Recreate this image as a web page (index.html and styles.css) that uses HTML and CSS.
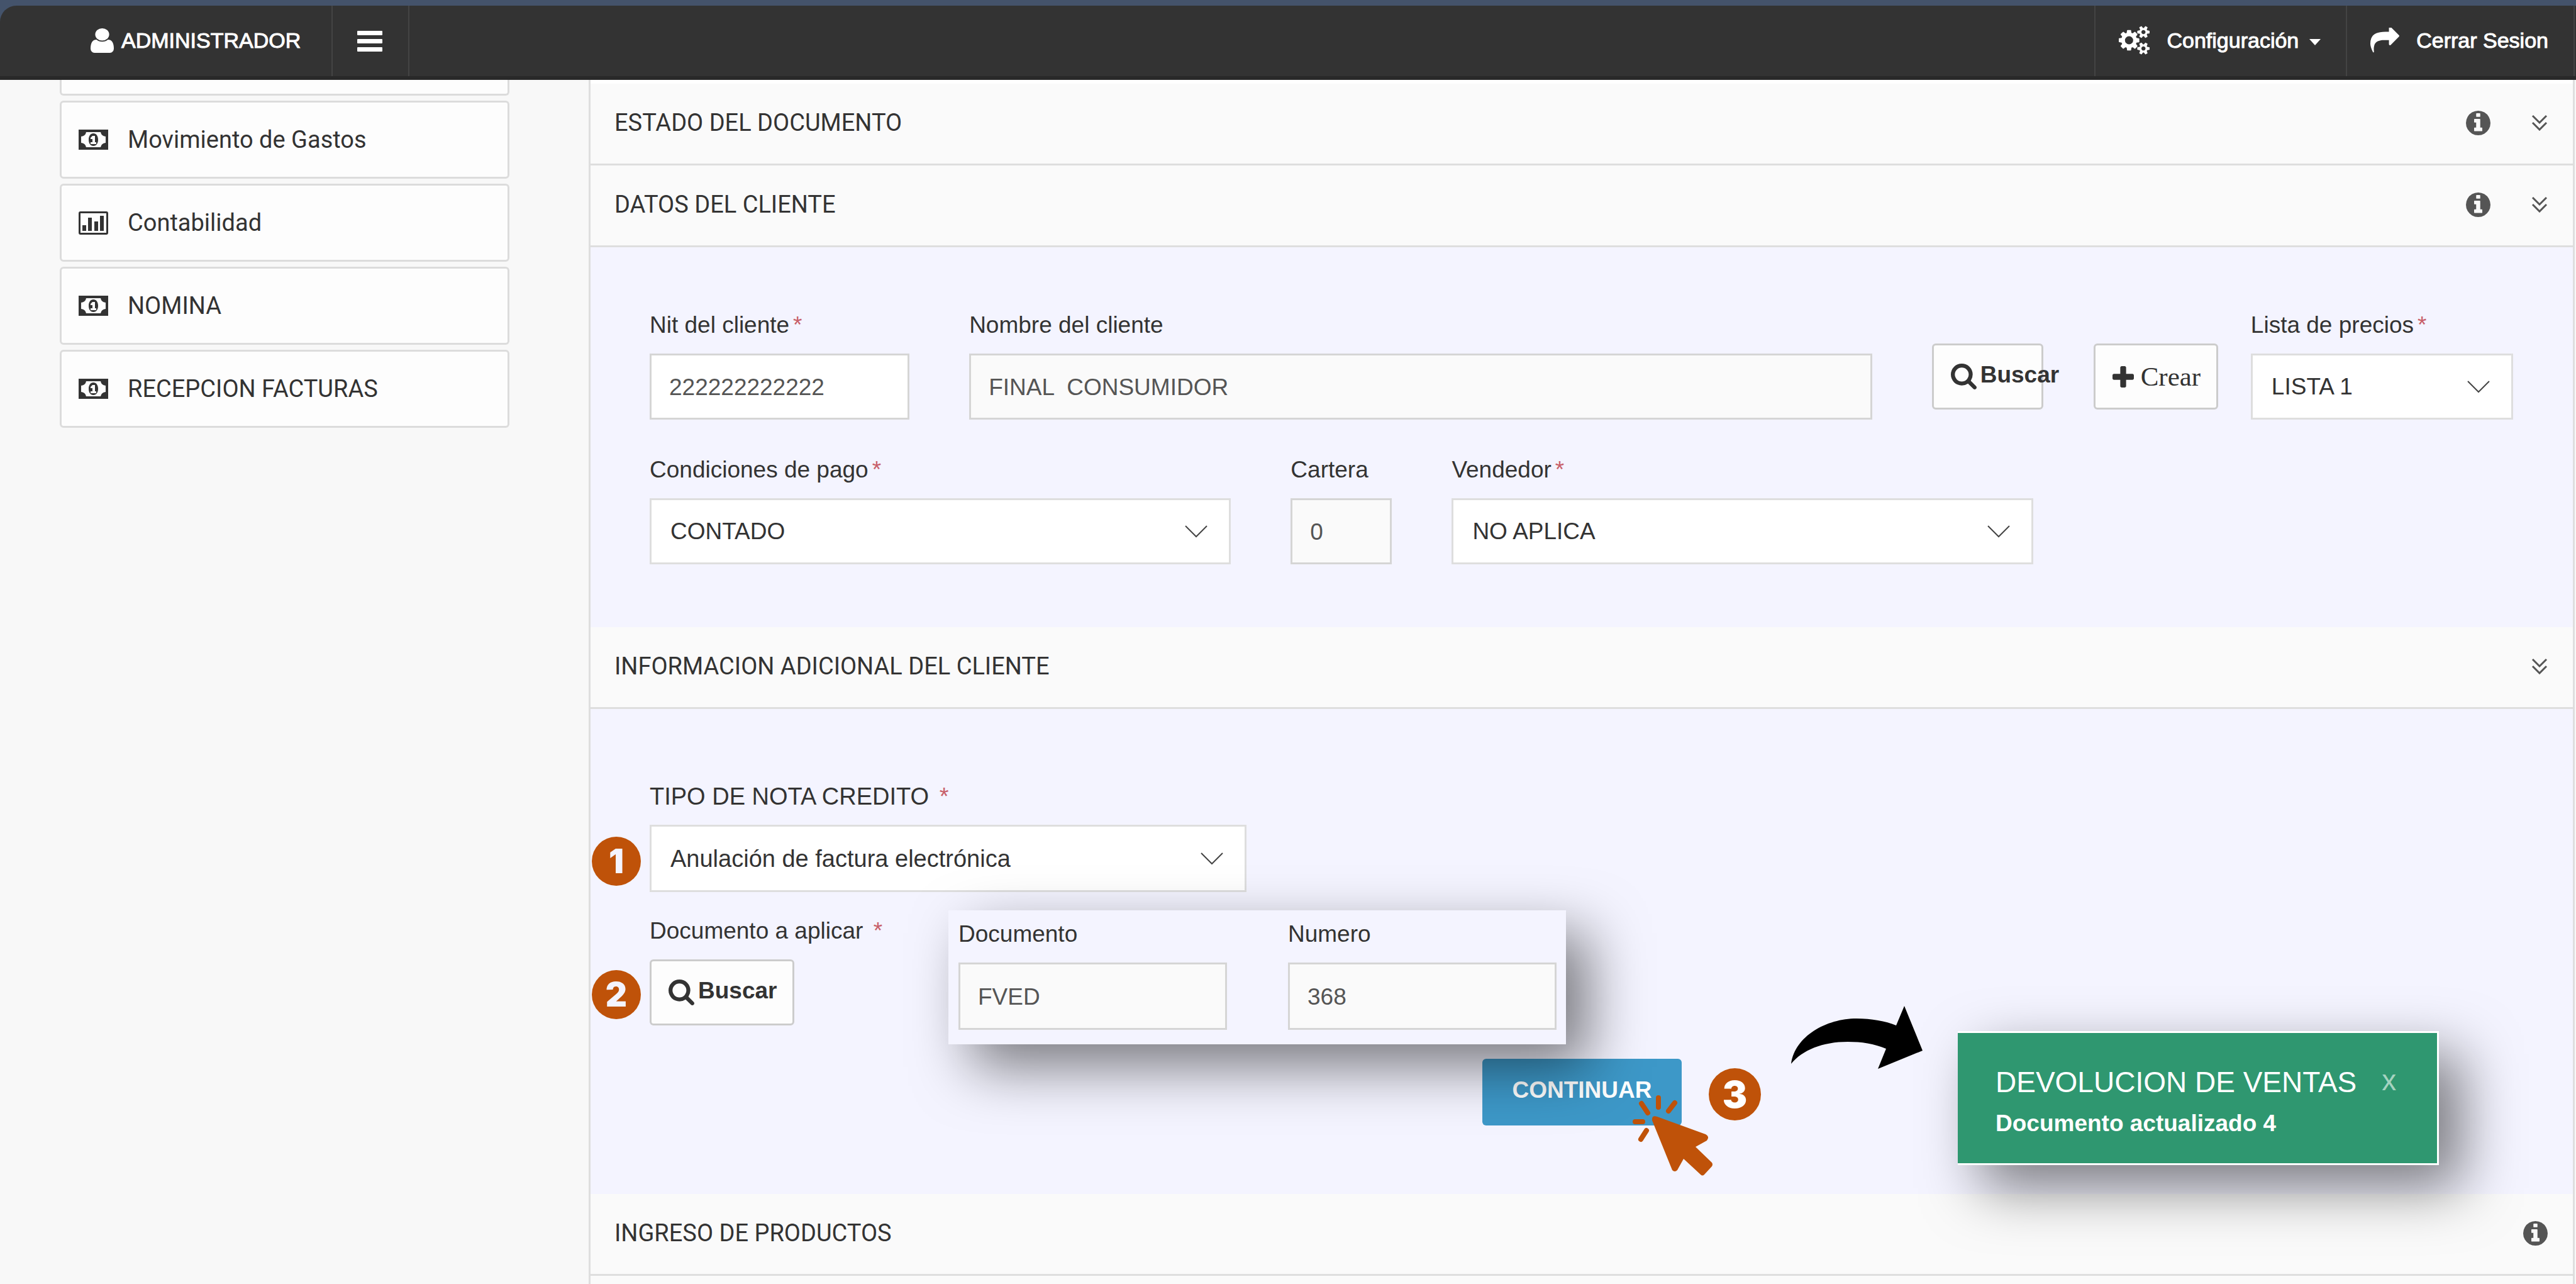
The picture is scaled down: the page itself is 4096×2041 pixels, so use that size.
FILE: index.html
```html
<!DOCTYPE html>
<html lang="es">
<head>
<meta charset="utf-8">
<title>Devolución de ventas</title>
<link rel="stylesheet" href="styles.css">
</head>
<body>
<svg class="sprite" aria-hidden="true">
  <symbol id="i-money" viewBox="0 0 47 32">
    <path fill-rule="evenodd" d="M0 0H47V32H0ZM12 4Q11 10 4 11V21Q11 22 12 28H35Q36 22 43 21V11Q36 10 35 4Z"/>
    <path fill-rule="evenodd" d="M23.500 6C28 6 31 10 31 16S28 26 23.500 26S16 22 16 16S19 6 23.500 6ZM22 10L19 13V15H22V20H19V23H28V20H26V10Z"/>
  </symbol>
  <symbol id="i-chart" viewBox="0 0 47 37">
    <path fill-rule="evenodd" d="M3 0H44Q47 0 47 3V34Q47 37 44 37H3Q0 37 0 34V3Q0 0 3 0ZM3 3V34H44V3Z"/>
    <path d="M6 22H12V31H6ZM15 10H21V31H15ZM25 16H31V31H25ZM34 7H40V31H34Z"/>
  </symbol>
  <symbol id="i-info" viewBox="128 128 1536 1536">
    <path d="M1152 1376v-160q0-14-9-23t-23-9h-96v-512q0-14-9-23t-23-9h-320q-14 0-23 9t-9 23v160q0 14 9 23t23 9h96v320h-96q-14 0-23 9t-9 23v160q0 14 9 23t23 9h448q14 0 23-9t9-23zm-128-896v-160q0-14-9-23t-23-9h-192q-14 0-23 9t-9 23v160q0 14 9 23t23 9h192q14 0 23-9t9-23zm640 416q0 209-103 385.500t-279.500 279.500-385.500 103-385.500-103-279.500-279.500-103-385.500 103-385.500 279.500-279.500 385.500-103 385.500 103 279.500 279.500 103 385.500z"/>
  </symbol>
  <symbol id="i-down" viewBox="0 0 26 26">
    <path d="M2 2L13 13L24 2M2 13L13 24L24 13" fill="none" stroke="currentColor" stroke-width="3"/>
  </symbol>
  <symbol id="i-search" viewBox="64 128 1664 1664" preserveAspectRatio="none">
    <path d="M1216 832q0-185-131.500-316.500t-316.500-131.500-316.500 131.500-131.500 316.500 131.500 316.500 316.500 131.500 316.500-131.500 131.500-316.500zm512 832q0 52-38 90t-90 38q-54 0-90-38l-343-342q-179 124-399 124-143 0-273.500-55.500t-225-150-150-225-55.500-273.500 55.500-273.500 150-225 225-150 273.500-55.500 273.500 55.500 225 150 150 225 55.500 273.500q0 220-124 399l343 343q37 37 37 90z"/>
  </symbol>
</svg>

<header class="topbar">
  <a class="topbar-user" href="#">
    <svg class="ico-user" viewBox="256 128 1280 1536" preserveAspectRatio="none" aria-hidden="true"><path d="M1536 1399q0 109-62.500 187t-150.500 78h-854q-88 0-150.500-78t-62.500-187q0-85 8.500-160.500t31.500-152 58.500-131 94-89 134.500-34.500q131 128 313 128t313-128q76 0 134.500 34.500t94 89 58.500 131 31.500 152 8.500 160.500zm-256-887q0 159-112.500 271.500t-271.500 112.500-271.500-112.500-112.500-271.500 112.500-271.500 271.500-112.500 271.500 112.500 112.500 271.500z"/></svg>
    <span>ADMINISTRADOR</span>
  </a>
  <button class="topbar-toggle" type="button" aria-label="Menú">
    <svg class="ico-bars" viewBox="0 0 40 33" aria-hidden="true"><path d="M1 0H39Q40 0 40 1V6Q40 7 39 7H1Q0 7 0 6V1Q0 0 1 0ZM1 13H39Q40 13 40 14V19Q40 20 39 20H1Q0 20 0 19V14Q0 13 1 13ZM1 26H39Q40 26 40 27V32Q40 33 39 33H1Q0 33 0 32V27Q0 26 1 26Z"/></svg>
  </button>
  <nav class="topbar-links">
    <a href="#">
      <svg class="ico-cogs" viewBox="0 0 1920 1792" aria-hidden="true"><path d="M896 896q0-106-75-181t-181-75-181 75-75 181 75 181 181 75 181-75 75-181zm768 512q0-52-38-90t-90-38-90 38-38 90q0 53 37.500 90.500t90.500 37.500 90.500-37.500 37.500-90.500zm0-1024q0-52-38-90t-90-38-90 38-38 90q0 53 37.500 90.500t90.500 37.500 90.500-37.500 37.500-90.500zm-384 421v185q0 10-7 19.500t-16 10.500l-155 24q-11 35-32 76 34 48 90 115 7 11 7 20 0 12-7 19-23 30-82.500 89.500t-78.500 59.500q-11 0-21-7l-115-90q-37 19-77 31-11 108-23 155-7 24-30 24h-186q-11 0-20-7.500t-10-17.500l-23-153q-34-10-75-31l-118 89q-7 7-20 7-11 0-21-8-144-133-144-160 0-9 7-19 10-14 41-53t47-61q-23-44-35-82l-152-24q-10-1-17-9.500t-7-19.500v-185q0-10 7-19.500t16-10.500l155-24q11-35 32-76-34-48-90-115-7-11-7-20 0-12 7-20 22-30 82-89t79-59q11 0 21 7l115 90q34-18 77-32 11-108 23-154 7-24 30-24h186q11 0 20 7.500t10 17.500l23 153q34 10 75 31l118-89q8-7 20-7 11 0 21 8 144 133 144 160 0 8-7 19-12 16-42 54t-45 60q23 48 34 82l152 23q10 2 17 10.500t7 19.500zm640 533v140q0 16-149 31-12 27-30 52 51 113 51 138 0 4-4 7-122 71-124 71-8 0-46-47t-52-68q-20 2-30 2t-30-2q-14 21-52 68t-46 47q-2 0-124-71-4-3-4-7 0-25 51-138-18-25-30-52-149-15-149-31v-140q0-16 149-31 13-29 30-52-51-113-51-138 0-4 4-7 4-2 35-20t59-34 30-16q8 0 46 46.500t52 67.500q20-2 30-2t30 2q51-71 92-112l6-2q4 0 124 70 4 3 4 7 0 25-51 138 17 23 30 52 149 15 149 31zm0-1024v140q0 16-149 31-12 27-30 52 51 113 51 138 0 4-4 7-122 71-124 71-8 0-46-47t-52-68q-20 2-30 2t-30-2q-14 21-52 68t-46 47q-2 0-124-71-4-3-4-7 0-25 51-138-18-25-30-52-149-15-149-31v-140q0-16 149-31 13-29 30-52-51-113-51-138 0-4 4-7 4-2 35-20t59-34 30-16q8 0 46 46.500t52 67.500q20-2 30-2t30 2q51-71 92-112l6-2q4 0 124 70 4 3 4 7 0 25-51 138 17 23 30 52 149 15 149 31z"/></svg>
      <span>Configuración</span>
      <i class="caret"></i>
    </a>
    <a href="#">
      <svg class="ico-share" viewBox="0 128 1792 1600" preserveAspectRatio="none" aria-hidden="true"><path d="M1792 640q0 26-19 45l-512 512q-19 19-45 19t-45-19-19-45v-256h-224q-98 0-175.500 6t-154 21.500-133 42.500-105.500 69.500-80 101-48.500 138.500-17.500 181q0 55 5 123 0 6 2.500 23.500t2.500 26.500q0 15-8.500 25t-23.500 10q-16 0-28-17-7-9-13-22t-13.500-30-10.500-24q-127-285-127-451 0-199 53-333 162-403 875-403h224v-256q0-26 19-45t45-19 45 19l512 512q19 19 19 45z"/></svg>
      <span>Cerrar Sesion</span>
    </a>
  </nav>
</header>

<div class="layout">
  <nav class="sidebar">
    <ul class="menu">
      <li class="menu-item menu-item-cut"></li>
      <li class="menu-item"><a href="#"><svg class="ico-money"><use href="#i-money"/></svg><span>Movimiento de Gastos</span></a></li>
      <li class="menu-item"><a href="#"><svg class="ico-chart"><use href="#i-chart"/></svg><span>Contabilidad</span></a></li>
      <li class="menu-item"><a href="#"><svg class="ico-money"><use href="#i-money"/></svg><span>NOMINA</span></a></li>
      <li class="menu-item"><a href="#"><svg class="ico-money"><use href="#i-money"/></svg><span>RECEPCION FACTURAS</span></a></li>
    </ul>
  </nav>

  <main class="content">
    <section>
      <div class="head">
        <h2>ESTADO DEL DOCUMENTO</h2>
        <button type="button" aria-label="Información"><svg class="ico-info"><use href="#i-info"/></svg></button>
        <button type="button" aria-label="Desplegar"><svg class="ico-down"><use href="#i-down"/></svg></button>
      </div>
    </section>

    <section>
      <div class="head">
        <h2>DATOS DEL CLIENTE</h2>
        <button type="button" aria-label="Información"><svg class="ico-info"><use href="#i-info"/></svg></button>
        <button type="button" aria-label="Desplegar"><svg class="ico-down"><use href="#i-down"/></svg></button>
      </div>
      <div class="body body-client">
        <div class="row row-client">
          <div class="field"><label for="nit">Nit del cliente<b class="req">*</b></label><input id="nit" type="text" value="222222222222"></div>
          <div class="field"><label for="nombre">Nombre del cliente</label><input id="nombre" type="text" value="FINAL  CONSUMIDOR" readonly></div>
          <div class="actions">
            <button class="btn btn-narrow" type="button"><svg class="ico-search"><use href="#i-search"/></svg><span class="strong">Buscar</span></button>
            <button class="btn" type="button"><svg class="ico-plus" viewBox="192 128 1408 1408" aria-hidden="true"><path d="M1600 736v192q0 40-28 68t-68 28h-416v416q0 40-28 68t-68 28h-192q-40 0-68-28t-28-68v-416h-416q-40 0-68-28t-28-68v-192q0-40 28-68t68-28h416v-416q0-40 28-68t68-28h192q40 0 68 28t28 68v416h416q40 0 68 28t28 68z"/></svg><span class="serif">Crear</span></button>
          </div>
          <div class="field"><label for="lista">Lista de precios<b class="req">*</b></label><select id="lista"><option>LISTA 1</option></select></div>
        </div>
        <div class="row row-terms">
          <div class="field"><label for="pago">Condiciones de pago<b class="req">*</b></label><select id="pago"><option>CONTADO</option></select></div>
          <div class="field"><label for="cartera">Cartera</label><input id="cartera" type="text" value="0" readonly></div>
          <div class="field"><label for="vendedor">Vendedor<b class="req">*</b></label><select id="vendedor"><option>NO APLICA</option></select></div>
        </div>
      </div>
    </section>

    <section>
      <div class="head">
        <h2>INFORMACION ADICIONAL DEL CLIENTE</h2>
        <button type="button" aria-label="Desplegar"><svg class="ico-down"><use href="#i-down"/></svg></button>
      </div>
      <div class="body body-note">
        <div class="field field-type">
          <label for="tipo">TIPO DE NOTA CREDITO <b class="req">*</b></label>
          <select id="tipo"><option>Anulación de factura electrónica</option></select>
          <span class="step step-side">1</span>
        </div>
        <div class="row-doc">
          <div class="field doc-search">
            <label for="buscar-doc">Documento a aplicar <b class="req">*</b></label>
            <button class="btn" id="buscar-doc" type="button"><svg class="ico-search"><use href="#i-search"/></svg><span class="strong">Buscar</span></button>
            <span class="step step-side">2</span>
          </div>
          <div class="doc-card">
            <div class="field"><label for="doc">Documento</label><input id="doc" type="text" value="FVED" readonly></div>
            <div class="field"><label for="num">Numero</label><input id="num" type="text" value="368" readonly></div>
          </div>
        </div>
        <div class="submit">
          <button class="btn-primary" type="button">CONTINUAR</button>
          <svg class="pointer" viewBox="0 0 128 128" aria-hidden="true">
            <path d="M42 4V19M15 13L25 28M68 12L58 25M5 42H17M23 56L14 70" fill="none" stroke="#bf5209" stroke-width="8" stroke-linecap="round"/>
            <path d="M40 34L117 62Q124 66 119 72L101 82L127 107Q129 110 127 113L115 126Q112 129 109 126L82 101L72 119Q68 123 64 119L32 40Q31 31 40 34Z" fill="#bf5209"/>
          </svg>
          <span class="step step-big">3</span>
          <svg class="swoosh" viewBox="0 0 209 100" aria-hidden="true"><path d="M0 92C6 48 56 20 104 20C128 20 150 24 167 31L180 0L209 71L138 100L151 68C132 60 112 57 90 57C50 57 18 70 0 92Z"/></svg>
        </div>
        <div class="toast" role="status">
          <div class="toast-head"><strong>DEVOLUCION DE VENTAS</strong><button type="button" aria-label="Cerrar">x</button></div>
          <p>Documento actualizado 4</p>
        </div>
      </div>
    </section>

    <section class="last">
      <div class="head">
        <h2>INGRESO DE PRODUCTOS</h2>
        <button type="button" aria-label="Información"><svg class="ico-info"><use href="#i-info"/></svg></button>
      </div>
    </section>
  </main>
</div>
</body>
</html>
```
FILE: styles.css
```css
* { box-sizing: border-box; }

body {
  margin: 0;
  min-height: 100vh;
  display: flex;
  flex-direction: column;
  padding-top: 9px;
  background: #44536b;
  color: #333;
  font: 37px/44px "Liberation Sans", Arial, sans-serif;
}

button, input, select { font: inherit; color: inherit; margin: 0; }
button { background: none; border: 0; padding: 0; cursor: pointer; }
a { color: inherit; text-decoration: none; }
svg { display: block; flex: none; fill: currentColor; }
.sprite { position: absolute; width: 0; height: 0; }

/* Top bar */
.topbar {
  display: flex;
  height: 118px;
  background: #333;
  border-bottom: 6px solid #292929;
  border-top-left-radius: 26px;
  color: #fff;
  font-size: 34px;
  -webkit-text-stroke: 1px currentColor;
}
.topbar-user { display: flex; align-items: center; gap: 12px; padding: 0 49px 2px 144px; }
.topbar-toggle { width: 124px; padding-left: 39px; border: 2px solid #444; border-width: 0 2px; }
.topbar-links { display: flex; margin-left: auto; margin-right: 2px; border-right: 2px solid #444; }
.topbar-links a { display: flex; align-items: center; padding: 0 40px 2px 37px; border-left: 2px solid #444; }
.topbar-links svg { margin-right: 27px; }
.caret { margin: 6px 0 0 17px; border: 9px solid transparent; border-top: 10px solid #fff; border-bottom: 0; }
.ico-user { width: 37px; height: 39px; }
.ico-bars { width: 40px; height: 33px; }
.ico-cogs { width: 49px; height: 46px; }
.ico-share { width: 46px; height: 41px; }

/* Page frame */
.layout { flex: 1; display: flex; background: #f8f8f8; }
.sidebar { width: 936px; flex: none; padding: 0 126px 0 95px; }
.content {
  flex: 1;
  display: flex;
  flex-direction: column;
  margin-right: 2px;
  padding-top: 6px;
  background: #fff;
  border: 3px solid #dedede;
  border-width: 0 3px;
}

/* Side menu */
.menu { list-style: none; margin: 0; padding: 0; display: flex; flex-direction: column; gap: 8px; }
.menu-item { height: 124px; background: #fdfdfd; border: 3px solid #dcdcdc; border-radius: 6px; }
.menu-item-cut { height: 25px; border-top: 0; border-radius: 0 0 6px 6px; }
.menu-item a {
  display: flex;
  align-items: center;
  gap: 31px;
  height: 100%;
  padding: 0 27px;
  font: 38px/52px Roboto, sans-serif;
}
.ico-money { width: 47px; height: 32px; }
.ico-chart { width: 47px; height: 37px; }

/* Section headings */
.head {
  display: flex;
  align-items: center;
  gap: 65px;
  height: 130px;
  padding: 0 40px 3px 38px;
  background: #fafafa;
  border-bottom: 3px solid #dedede;
  color: #555;
}
.head h2 {
  flex: 1;
  margin: 0;
  color: #333;
  font: 38px/52px Roboto, sans-serif;
}
.ico-info { width: 39px; height: 39px; }
.ico-down { width: 26px; height: 26px; }
.last { flex: 1; background: #fafafa; }

/* Forms */
.body { position: relative; background: #f4f4ff; padding: 0 95px 0 94px; }
.body-client { display: flex; flex-direction: column; gap: 58px; padding-top: 102px; padding-bottom: 100px; }
.body-note { padding-top: 117px; padding-bottom: 109px; }

.field { display: flex; flex-direction: column; gap: 23px; min-width: 0; }
.field label { white-space: nowrap; }
.req { margin-left: 6px; font-weight: normal; color: #c8606a; }

input, select {
  width: 100%;
  height: 105px;
  border: 3px solid #dedede;
  border-radius: 0;
  background: #fff;
  outline: 0;
}
input { padding: 3px 28px 0; border-color: #d5d5d5; color: #555; white-space: pre; }
input[readonly] { background: #fafafa; }
select {
  appearance: none;
  padding: 0 90px 0 30px;
  background: #fff url("data:image/svg+xml,%3Csvg xmlns='http://www.w3.org/2000/svg' width='38' height='21' viewBox='0 0 38 21'%3E%3Cpath d='M2 2L19 19L36 2' fill='none' stroke='%23444' stroke-width='2'/%3E%3C/svg%3E") no-repeat right 33px center;
}

.row { display: grid; align-items: start; column-gap: 95px; }
.row-client { grid-template-columns: 413fr 1435fr 457fr 372fr; }
.row-client .field:last-child { margin-left: -45px; }
.row-terms { grid-template-columns: 924fr 161fr 924fr 668fr; }

.actions { display: flex; gap: 80px; margin-top: 51px; }
.btn {
  display: flex;
  align-items: center;
  height: 105px;
  padding: 0 25px 0 27px;
  border: 3px solid #ccc;
  border-radius: 6px;
  background: #fdfdfd;
  white-space: nowrap;
}
.btn-narrow { width: 177px; }
.btn .strong { margin-left: 6px; padding-bottom: 6px; font-weight: bold; }
.btn .serif { margin-left: 11px; font: 43px/50px "Liberation Serif", serif; }
.ico-search { width: 41px; height: 41px; }
.ico-plus { width: 34px; height: 34px; }

/* Credit note */
.field-type { position: relative; width: 949px; font-size: 38px; }
.field-type select, .doc-card input { height: 107px; }
.row-doc { display: flex; align-items: flex-start; margin-top: 29px; }
.doc-search { position: relative; width: 475px; margin-top: 11px; align-items: flex-start; }
.doc-card {
  position: relative;
  z-index: 1;
  display: grid;
  grid-template-columns: 1fr 1fr;
  column-gap: 97px;
  width: 982px;
  padding: 16px 15px 23px 16px;
  background: #f4f4ff;
  box-shadow: 36px 36px 90px rgba(0, 0, 0, .5);
}
.submit { position: relative; display: flex; margin: 23px 0 0 1324px; }
.btn-primary {
  width: 317px;
  height: 106px;
  padding-bottom: 6px;
  border-radius: 6px;
  background: #3d98c8;
  color: #fff;
  font-weight: bold;
}

/* Step markers and pointers laid over the form */
.step {
  position: absolute;
  display: flex;
  align-items: center;
  justify-content: center;
  width: 78px;
  height: 78px;
  border-radius: 50%;
  background: #bf5209;
  color: #f4f4ff;
  font: 900 53px/53px Inter, sans-serif;
}
.step-side { left: -92px; bottom: 10px; }
.step-big { left: 360px; top: 15px; width: 83px; height: 83px; color: #fff; font-size: 59px; z-index: 2; }
.pointer { position: absolute; left: 238px; top: 58px; width: 128px; height: 128px; z-index: 2; }
.swoosh { position: absolute; left: 491px; top: -84px; width: 209px; height: 100px; color: #000; z-index: 2; }

.toast {
  position: absolute;
  z-index: 1;
  right: 213px;
  bottom: 46px;
  width: 765px;
  height: 213px;
  padding: 48px 60px;
  border: 3px solid #fff;
  border-left: 0;
  background: #2f9770;
  color: #fff;
  box-shadow: 36px 36px 90px rgba(0, 0, 0, .5);
}
.toast-head { display: flex; align-items: center; gap: 40px; font-size: 46px; line-height: 54px; white-space: nowrap; }
.toast-head strong { font-weight: normal; }
.toast-head button { padding-bottom: 6px; color: #a5d3c0; }
.toast p { margin: 14px 0 0; font-weight: bold; }
```
